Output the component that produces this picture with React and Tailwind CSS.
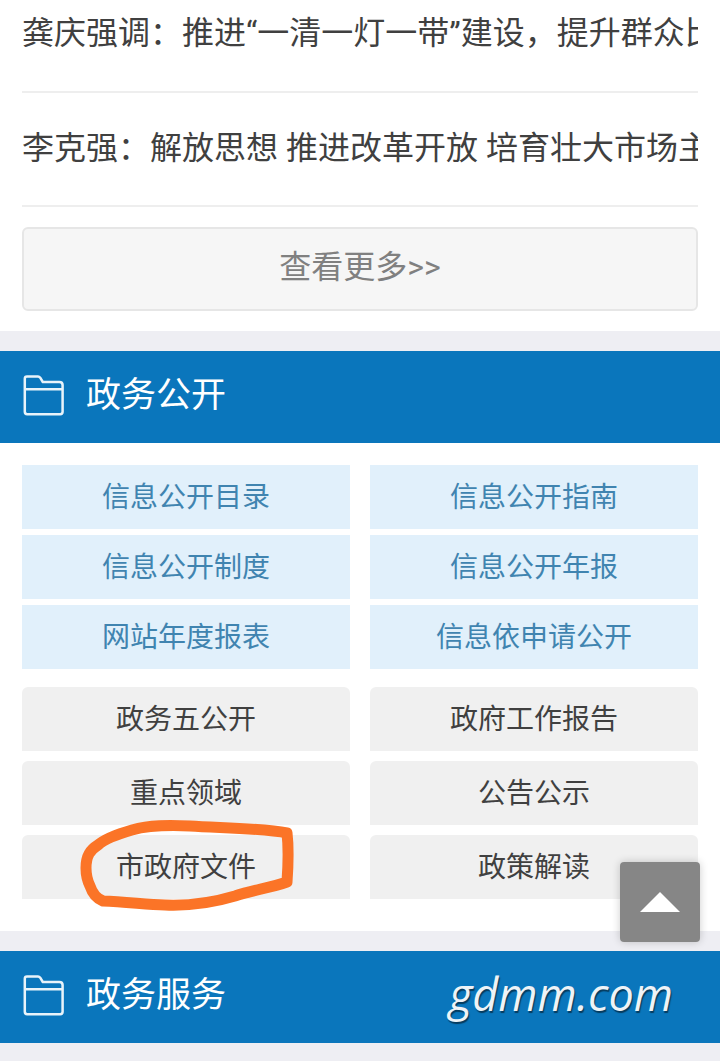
const font = { fontFamily: '"Roboto", "Noto Sans CJK SC", sans-serif' };

const blueItems = ['信息公开目录', '信息公开指南', '信息公开制度', '信息公开年报', '网站年度报表', '信息依申请公开'];
const grayItems = ['政务五公开', '政府工作报告', '重点领域', '公告公示', '市政府文件', '政策解读'];

function FolderIcon() {
  return (
    <svg width="41" height="41" viewBox="0 0 41 41" fill="none" stroke="#e8f3fa" strokeWidth="2.5" strokeLinejoin="round" className="shrink-0">
      <path d="M4 1.5h11c1 0 1.6.4 2.2 1.2l2.6 4.3h16.6c1.9 0 3.2 1.3 3.2 3v26.8c0 1.4-1 2.4-2.4 2.4H4.2c-1.4 0-2.4-1-2.4-2.4V3.7c0-1.3 1-2.2 2.2-2.2z" />
      <path d="M1.8 14.2h37.8" />
    </svg>
  );
}

function SectionHeader({ title }) {
  return (
    <div className="flex h-[92px] items-center gap-[22px] bg-[#0a76bc] pb-[3px] pl-[23px] text-[35px] text-white">
      <FolderIcon />
      <span className="pt-[2px]">{title}</span>
    </div>
  );
}

export default function App() {
  return (
    <div className="relative h-[1061px] w-[720px] overflow-hidden bg-[#eeeef3]" style={font}>
      <div className="bg-white px-[22px] pb-5">
        <div className="flex h-[93px] items-start overflow-hidden whitespace-nowrap border-b-2 border-[#eeeeee] pt-[9px] text-[32px] leading-[48px] text-[#404040]">
          龚庆强调：推进“一清一灯一带”建设，提升群众比
        </div>
        <div className="flex h-[114px] items-start overflow-hidden whitespace-nowrap border-b-2 border-[#eeeeee] pt-[31px] text-[32px] leading-[48px] text-[#404040]">
          李克强：解放思想 推进改革开放 培育壮大市场主
        </div>
        <div className="mt-5 flex h-[84px] items-center justify-center rounded-md border-2 border-[#e6e6e6] bg-[#f6f6f6] pb-[4px] text-[32px] text-[#808080]">
          查看更多&gt;&gt;
        </div>
      </div>

      <div className="mt-5">
        <SectionHeader title="政务公开" />
        <div className="bg-white px-[22px] pb-8 pt-[22px]">
          <div className="grid grid-cols-2 gap-x-5 gap-y-[6px]">
            {blueItems.map((t) => (
              <div key={t} className="flex h-16 items-center justify-center bg-[#e1f0fb] pt-[2px] text-[28px] text-[#4084b0]">
                {t}
              </div>
            ))}
          </div>
          <div className="mt-[18px] grid grid-cols-2 gap-x-5 gap-y-[10px]">
            {grayItems.map((t) => (
              <div key={t} className="flex h-16 items-center justify-center rounded-t-md bg-[#f0f0f0] pt-[2px] text-[28px] text-[#404040]">
                {t}
              </div>
            ))}
          </div>
        </div>
      </div>

      <div className="mt-5">
        <SectionHeader title="政务服务" />
      </div>

      {/* hand-drawn circle on top of the screenshot */}
      <svg className="absolute left-0 top-[800px]" width="360" height="130" viewBox="0 800 360 130" fill="none">
        <path
          d="M86 868C86 856 90 850 98 845C106 838 118 834 132 830C150 825 168 825 190 826C220 828 262 828 287 833C289 850 288 868 287 882C270 888 253 890 235 896C215 902 190 906 165 905C145 904 125 902 103 901C95 898 92 892 90 886C87 880 86 875 86 868Z"
          stroke="#fb7427"
          strokeWidth="11"
          strokeLinejoin="round"
        />
      </svg>

      {/* back to top */}
      <div className="absolute left-[620px] top-[862px] flex h-20 w-20 items-center justify-center rounded bg-[#808080]/95 shadow-[0_0_8px_rgba(0,0,0,0.2)]">
        <div className="h-0 w-0 border-x-20 border-b-20 border-x-transparent border-b-white" />
      </div>

      {/* watermark */}
      <div
        className="absolute left-[449px] top-[964px] text-[45px] font-medium italic leading-[60px] text-[#eef3f7] [text-shadow:1px_2px_1px_rgba(0,0,0,0.5)]"
        style={{ fontFamily: '"Open Sans", sans-serif' }}
      >
        gdmm.com
      </div>
    </div>
  );
}
